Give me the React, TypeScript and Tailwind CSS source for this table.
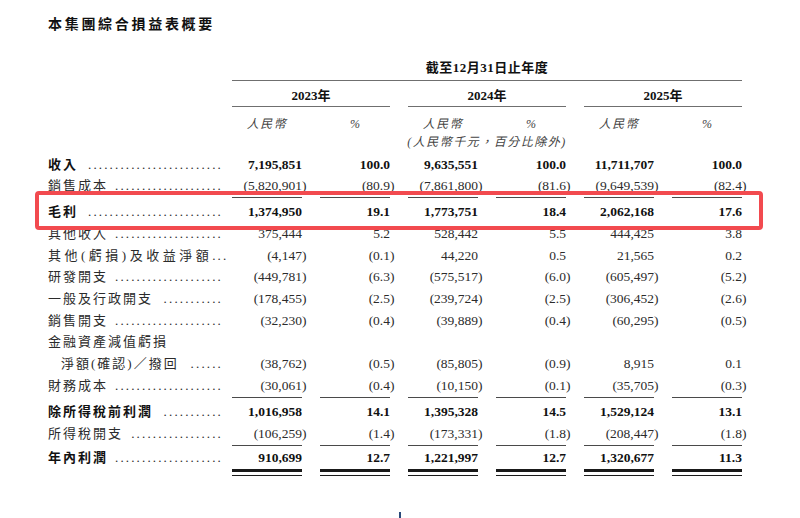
import React from "react";

type Row = {
  label: string;
  bold?: boolean;
  indent?: boolean;
  dots: number;
  track?: string;
  vals: string[];
  h: string;
};

const rows1: Row[] = [
  { label: "收入", bold: true, dots: 25, vals: ["7,195,851", "100.0", "9,635,551", "100.0", "11,711,707", "100.0"], h: "h-[21.5px]" },
  { label: "銷售成本", dots: 20, vals: ["(5,820,901)", "(80.9)", "(7,861,800)", "(81.6)", "(9,649,539)", "(82.4)"], h: "h-[21.5px]" },
];

const rows2: Row[] = [
  { label: "毛利", bold: true, dots: 25, vals: ["1,374,950", "19.1", "1,773,751", "18.4", "2,062,168", "17.6"], h: "h-[22px]" },
  { label: "其他收入", dots: 20, vals: ["375,444", "5.2", "528,442", "5.5", "444,425", "3.8"], h: "h-[21.67px]" },
  { label: "其他(虧損)及收益淨額", dots: 3, track: "tracking-[3.5px]", vals: ["(4,147)", "(0.1)", "44,220", "0.5", "21,565", "0.2"], h: "h-[21.67px]" },
  { label: "研發開支", dots: 20, vals: ["(449,781)", "(6.3)", "(575,517)", "(6.0)", "(605,497)", "(5.2)"], h: "h-[21.67px]" },
  { label: "一般及行政開支", dots: 11, vals: ["(178,455)", "(2.5)", "(239,724)", "(2.5)", "(306,452)", "(2.6)"], h: "h-[21.67px]" },
  { label: "銷售開支", dots: 20, vals: ["(32,230)", "(0.4)", "(39,889)", "(0.4)", "(60,295)", "(0.5)"], h: "h-[21.67px]" },
  { label: "金融資產減值虧損", dots: 0, vals: ["", "", "", "", "", ""], h: "h-[21.67px]" },
  { label: "淨額(確認)／撥回", indent: true, dots: 6, vals: ["(38,762)", "(0.5)", "(85,805)", "(0.9)", "8,915", "0.1"], h: "h-[21.67px]" },
  { label: "財務成本", dots: 20, vals: ["(30,061)", "(0.4)", "(10,150)", "(0.1)", "(35,705)", "(0.3)"], h: "h-[21.67px]" },
];

const rows3: Row[] = [
  { label: "除所得稅前利潤", bold: true, dots: 11, vals: ["1,016,958", "14.1", "1,395,328", "14.5", "1,529,124", "13.1"], h: "h-[23px]" },
  { label: "所得稅開支", dots: 17, vals: ["(106,259)", "(1.4)", "(173,331)", "(1.8)", "(208,447)", "(1.8)"], h: "h-[21.67px]" },
];

const rows4: Row[] = [
  { label: "年內利潤", bold: true, dots: 20, vals: ["910,699", "12.7", "1,221,997", "12.7", "1,320,677", "11.3"], h: "h-[21px]" },
];

function Num({ v, bold }: { v: string; bold?: boolean }) {
  const neg = v.startsWith("(");
  return (
    <div
      className={`w-[70px] text-right whitespace-nowrap text-[13.5px] leading-[16px] ${
        bold ? "font-bold text-[#111]" : "text-[#2b2b2b]"
      }`}
    >
      {neg ? (
        <>
          {v.slice(0, -1)}
          <span className="mr-[-4.5px]">)</span>
        </>
      ) : (
        v
      )}
    </div>
  );
}

function TableRow({ r }: { r: Row }) {
  return (
    <div className={`flex items-center ${r.h}`}>
      <div className="flex w-[184px] items-center justify-between pr-[9px]">
        <span
          className={`whitespace-nowrap text-[13px] leading-[16px] ${r.track ?? "tracking-[2px]"} ${
            r.indent ? "pl-[13px]" : ""
          } ${r.bold ? "font-bold text-[#111]" : "text-[#2b2b2b]"}`}
        >
          {r.label}
        </span>
        {r.dots > 0 && (
          <span className="whitespace-nowrap text-[13px] leading-[16px] tracking-[2.15px] text-[#2b2b2b]">
            {".".repeat(r.dots)}
          </span>
        )}
      </div>
      <div className="flex gap-[18px]">
        {r.vals.map((v, i) => (
          <Num key={i} v={v} bold={r.bold} />
        ))}
      </div>
    </div>
  );
}

function Underline({ h, top }: { h: string; top: string }) {
  return (
    <div className={`flex ${h}`}>
      <div className={`ml-[184px] flex gap-[18px] ${top}`}>
        {[0, 1, 2, 3, 4, 5].map((i) => (
          <div key={i} className="h-[1px] w-[70px] bg-[#4a4a4a]" />
        ))}
      </div>
    </div>
  );
}

export default function App() {
  return (
    <div
      className="relative h-[518px] w-[800px] overflow-hidden bg-white"
      style={{ fontFamily: '"Liberation Serif", "Noto Sans CJK TC", serif' }}
    >
      <div className="pl-[48px]">
        {/* Title */}
        <div className="mt-[15px] h-[20px] text-[14px] font-bold leading-[20px] tracking-[2.7px] text-[#111]">
          本集團綜合損益表概要
        </div>

        {/* Period header */}
        <div className="ml-[184px] mt-[23px] flex h-[20px] w-[510px] items-center justify-center">
          <span className="whitespace-nowrap text-[13px] font-bold leading-[20px] tracking-[0.5px] text-[#111]">
            截至12月31日止年度
          </span>
        </div>
        <div className="ml-[184px] mt-[1.5px] h-[1.5px] w-[510px] bg-[#6f6f6f]" />

        {/* Years */}
        <div className="ml-[184px] flex h-[24.5px] w-[510px] gap-[18px] pt-[7.5px]">
          {["2023年", "2024年", "2025年"].map((y) => (
            <div
              key={y}
              className="w-[158px] text-center text-[13px] font-bold leading-[14px] text-[#111]"
            >
              {y}
            </div>
          ))}
        </div>
        <div className="ml-[184px] flex w-[510px] gap-[18px]">
          {[0, 1, 2].map((i) => (
            <div key={i} className="h-[1.5px] w-[158px] bg-[#6f6f6f]" />
          ))}
        </div>

        {/* Currency labels */}
        <div className="ml-[184px] mt-[6.5px] flex h-[20px] gap-[18px]">
          {[0, 1, 2].map((i) => (
            <React.Fragment key={i}>
              <div className="w-[70px] text-center text-[12px] italic leading-[20px] tracking-[1.5px] text-[#444]">
                人民幣
              </div>
              <div className="w-[70px] text-center text-[12px] italic leading-[20px] text-[#444]">
                %
              </div>
            </React.Fragment>
          ))}
        </div>
        <div className="ml-[184px] flex h-[17px] w-[510px] gap-[18px]">
          <div className="w-[158px]" />
          <div className="flex w-[158px] justify-center">
            <span className="whitespace-nowrap text-[12px] italic leading-[17px] tracking-[1.5px] text-[#444]">
              (人民幣千元，百分比除外)
            </span>
          </div>
        </div>

        <div className="mt-[3.25px]">
          {rows1.map((r) => (
            <TableRow key={r.label} r={r} />
          ))}
          <Underline h="h-[4.5px]" top="mt-0" />
          {rows2.map((r) => (
            <TableRow key={r.label} r={r} />
          ))}
          <Underline h="h-[4px]" top="mt-[0.2px]" />
          {rows3.map((r) => (
            <TableRow key={r.label} r={r} />
          ))}
          <Underline h="h-[2.5px]" top="mt-0" />
          {rows4.map((r) => (
            <TableRow key={r.label} r={r} />
          ))}
          <div className="ml-[184px] mt-[0.7px] flex gap-[18px]">
            {[0, 1, 2, 3, 4, 5].map((i) => (
              <div key={i} className="w-[70px]">
                <div className="h-[3px] bg-[#1a1a1a]" />
                <div className="mt-[3px] h-[1px] bg-[#1a1a1a]" />
              </div>
            ))}
          </div>
        </div>
      </div>

      {/* Highlight box overlay */}
      <div className="absolute left-[35px] top-[191px] h-[39px] w-[728px] rounded-[4px] border-[4.5px] border-[#f24a4f]" />

      {/* tiny cursor artifact */}
      <div className="absolute left-[399px] top-[512px] h-[6px] w-[2px] bg-[#2a4a7a]" />
    </div>
  );
}
